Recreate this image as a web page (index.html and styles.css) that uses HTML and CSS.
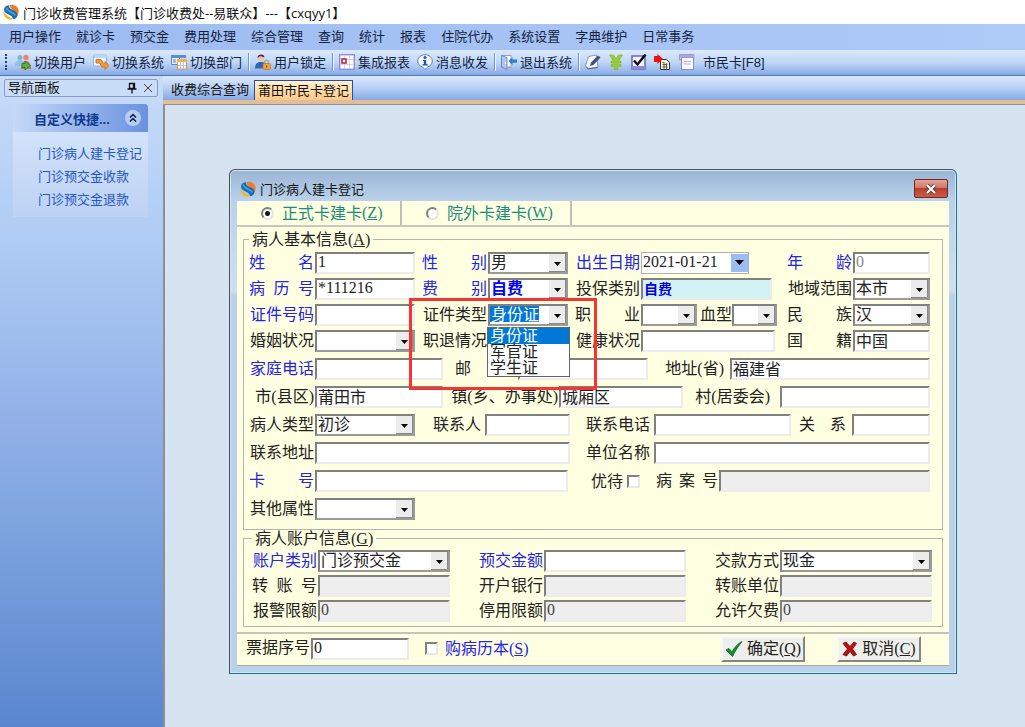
FILE: index.html
```html
<!DOCTYPE html>
<html lang="zh-CN">
<head>
  <meta charset="UTF-8" />
  <meta name="viewport" content="width=device-width, initial-scale=1.0"/>
  <title>门诊收费管理系统</title>
  <link rel="stylesheet" href="styles.css">
</head>
<body>
  <!-- Shared logo -->
  <svg class="defs" width="0" height="0">
    <symbol id="logo" viewBox="0 0 16 16">
      <path d="M6 1.500C10-.5 14.500 2 15.500 6c.3 2.500-.3 4.500-1.500 6z" fill="#f07a28"/>
      <path d="M.8 7C.5 9 3 11 10 15.300c-4 1.200-8.200-.8-9.300-4.800C.3 9 .4 8 .8 7z" fill="#f5b82c"/>
      <path d="M6 1.200C2.500 1.200.6 4 1.200 6.500c.6 3 4 3.500 6.300 5 1.500 1 2.500 2.200 2.500 3.800 3-.5 4.700-2.300 4.500-4.800C14 7 10 6.500 8 5 6.500 4 5.500 2.800 6 1.200z" fill="#1a6cb8"/>
      <path d="M3.500 3.500c0 4.500 7 4 9 8" fill="none" stroke="#45a8e0" stroke-width="1.600"/>
    </symbol>
  </svg>

  <header class="title-bar">
    <svg class="icon"><use href="#logo"/></svg>
    <h1>门诊收费管理系统【门诊收费处--易联众】---【cxqyy1】</h1>
  </header>

  <nav class="menu-bar">
    <a href="#">用户操作</a>
    <a href="#">就诊卡</a>
    <a href="#">预交金</a>
    <a href="#">费用处理</a>
    <a href="#">综合管理</a>
    <a href="#">查询</a>
    <a href="#">统计</a>
    <a href="#">报表</a>
    <a href="#">住院代办</a>
    <a href="#">系统设置</a>
    <a href="#">字典维护</a>
    <a href="#">日常事务</a>
  </nav>

  <div class="toolbar">
    <span class="grip"></span>
    <button type="button">
      <svg class="icon" viewBox="0 0 16 16"><circle cx="5" cy="3.500" r="2.500" fill="#7ab3dd"/><circle cx="11" cy="3.500" r="2.700" fill="#ed8470"/><path d="M0 12c0-4 2-6 5-6s4 2 4 6z" fill="#8ec4e8"/><path d="M6 15c0-5 2-8 5-8s5 3 5 8z" fill="#d96a50"/><path d="M7 9.500h3V7l5.500 4.500L10 16v-2.500H7z" fill="#55b83c" stroke="#237618" stroke-width=".8"/></svg>
      切换用户
    </button>
    <button type="button">
      <svg class="icon" viewBox="0 0 16 16"><rect x=".5" y="1" width="13" height="11" rx="1" fill="#eef6ff" stroke="#8ab6e6"/><path d="M1 1.500h12.500v2.500H1z" fill="#b9dafa"/><path d="M3 5.500h5l2.500 4H12V7.500l4 4-4 4v-2.500H9L6.500 9H3z" fill="#f49a34" stroke="#c9641a" stroke-width=".8"/></svg>
      切换系统
    </button>
    <button type="button">
      <svg class="icon" viewBox="0 0 16 16"><path d="M.5 1.500h8v9h-8z" fill="#e6f0fc" stroke="#5c86c9"/><path d="M0 1h15v3H0z" fill="#5d8bd6"/><path d="M2 6h3M2 8h3" stroke="#5c86c9"/><rect x="6.500" y="5.500" width="9" height="9.500" fill="#fff" stroke="#d89434"/><path d="M6 5h10v3H6z" fill="#f1b04c"/><path d="M9.500 8v7M12.500 8v7M7 11.500h8" stroke="#b9c3dd"/></svg>
      切换部门
    </button>
    <span class="separator"></span>
    <button type="button">
      <svg class="icon" viewBox="0 0 16 16"><circle cx="6" cy="4" r="3" fill="#efc39c"/><path d="M2.500 4C2 0 9.500-1 9.500 3.500 8 3 6 2 4.500 2.500z" fill="#4b2457"/><path d="M0 14.500C0 9.500 2.500 8 6 8s6 1.500 6 6.500z" fill="#2c66b4"/><path d="M9.500 10V8.500c0-3 4-3 4 0V10" fill="none" stroke="#a8a8b4" stroke-width="1.300"/><rect x="8" y="9.500" width="7.500" height="6" rx="1" fill="#f0a53a" stroke="#b8741c" stroke-width=".7"/><path d="M11.700 11.500v2" stroke="#63390a"/></svg>
      用户锁定
    </button>
    <span class="separator"></span>
    <button type="button">
      <svg class="icon" viewBox="0 0 16 16"><rect x=".7" y=".7" width="14.600" height="14.600" fill="#fff" stroke="#8e8bd8" stroke-width="1.400"/><path d="M1 5.500h14M1 10.500h14M5.500 1v14M10.500 1v14" stroke="#c9c8ec" stroke-width=".8"/><rect x="3" y="5" width="4" height="4" fill="#fff" stroke="#b02030" stroke-width="1.500"/></svg>
      集成报表
    </button>
    <button type="button">
      <svg class="icon" viewBox="0 0 16 16"><path d="M8 .7c4 0 7.300 2.800 7.300 6.300 0 3-2 5-4.600 5.900L8 15.500l-2.700-2.600C2.700 12 .7 10 .7 7 .7 3.500 4 .7 8 .7z" fill="#f5f9ff" stroke="#5f7eb0"/><circle cx="8" cy="3.500" r="1.500" fill="#2454a8"/><path d="M6 6h3.200v4H10.500v1.500H5.700V10h1.200V7.300H6z" fill="#2454a8"/></svg>
      消息收发
    </button>
    <span class="separator"></span>
    <button type="button">
      <svg class="icon" viewBox="0 0 16 16"><rect x="1" y="1.500" width="9" height="12" fill="#fff" stroke="#8ea4d0"/><path d="M.5 1.500L6 3.500V15.500L.5 13z" fill="#b4c4f0" stroke="#6478b8" stroke-width=".8"/><path d="M4.500 8v2" stroke="#fff"/><path d="M7.500 7L11.500 3v2.500H16v3.200h-4.500V11z" fill="#2d7ed8"/><circle cx="8" cy="13" r="1" fill="#e59a3c"/></svg>
      退出系统
    </button>
    <span class="separator"></span>
    <button type="button" aria-label="编辑">
      <svg class="icon" viewBox="0 0 16 16"><path d="M3.500 2.500l8-1.500 1.500 12-10 1.500L.5 12z" fill="#fbfcff" stroke="#8b93bb"/><path d="M1 12.500l2 2.500 10-1.500" fill="none" stroke="#59639c"/><path d="M5 12l1-3.500L13 1.500 15.500 3.500 8.500 11z" fill="#454d7c"/></svg>
    </button>
    <button type="button" aria-label="收费">
      <svg class="icon" viewBox="0 0 16 16"><path d="M1.500 1h4L8 5l2.500-4h4l-4 6H13v2H9.700v1.300H13v2H9.700V15.500H6.300v-3.200H3v-2h3.300V9H3V7h2.500z" fill="#99cc33" stroke="#7db02c" stroke-width=".6"/></svg>
    </button>
    <button type="button" aria-label="核对">
      <svg class="icon" viewBox="0 0 16 16"><rect x="1" y="2" width="13" height="13" fill="#f4f4ff" stroke="#6a68b4" stroke-width="1.500"/><path d="M1 12h13v3H1z" fill="#8f8cd0"/><path d="M3 6.500l3.500 4L14.500.5" fill="none" stroke="#08080c" stroke-width="2.400"/></svg>
    </button>
    <button type="button" aria-label="导入">
      <svg class="icon" viewBox="0 0 16 16"><path d="M6.500 5.500h6L15.500 8.500V15.500h-9z" fill="#fff3d0" stroke="#333"/><path d="M8.500 8.500h2M8.500 10.500h5M8.500 13h5M10 9v6M12.500 9v6" stroke="#555" stroke-width=".9"/><path d="M0 2h3.500V0L9 5 3.500 10V8H0z" fill="#f01010"/></svg>
    </button>
    <button type="button" class="card-button">
      <svg class="icon" viewBox="0 0 16 16"><rect x=".7" y=".7" width="14" height="5" fill="#e9e8fa" stroke="#8d8bc0"/><rect x="2.500" y="3.500" width="12" height="12" fill="#f8f8ff" stroke="#8d8bc0"/><path d="M1 1h13.500v2.500H1z" fill="#aaa8dc"/><path d="M5 7.500h7M5 10h7" stroke="#b5b4d8"/></svg>
      市民卡[F8]
    </button>
  </div>

  <main class="main">
    <!-- Navigation panel -->
    <aside class="sidebar">
      <div class="panel-title">
        <span>导航面板</span>
        <button type="button" aria-label="固定"><svg width="10" height="12" viewBox="0 0 10 12"><path d="M2.500 1.500h5v5h-5zM6.500 1.500v5M0.500 7h9M5 7v4.500" fill="none" stroke="#111" stroke-width="1.300"/></svg></button>
        <button type="button" aria-label="关闭"><svg width="10" height="10" viewBox="0 0 10 10"><path d="M1 1l8 8M9 1L1 9" stroke="#444"/></svg></button>
      </div>
      <section class="shortcuts">
        <header>
          <h2>自定义快捷...</h2>
          <button type="button" class="collapse" aria-label="收起"><svg width="16" height="16" viewBox="0 0 16 16"><path d="M5 7.500l3-3 3 3M5 11.500l3-3 3 3" fill="none" stroke="#0a1a3c" stroke-width="1.500"/></svg></button>
        </header>
        <a href="#">门诊病人建卡登记</a>
        <a href="#">门诊预交金收款</a>
        <a href="#">门诊预交金退款</a>
      </section>
    </aside>

    <section class="content">
      <div class="tabs">
        <button type="button">收费综合查询</button>
        <button type="button" class="active">莆田市民卡登记</button>
      </div>

      <div class="workspace">
        <form class="dialog">
          <div class="dialog-title">
            <svg class="icon"><use href="#logo"/></svg>
            <h2>门诊病人建卡登记</h2>
            <button type="button" class="close" aria-label="关闭"><svg width="12" height="10" viewBox="0 0 12 10"><path d="M2 1l8 8M10 1L2 9" stroke="#5b3a3a" stroke-width="4"/><path d="M2 1l8 8M10 1L2 9" stroke="#fff" stroke-width="2.200"/></svg></button>
          </div>

          <div class="dialog-body">
            <div class="card-type">
              <label><input type="radio" name="cardType" checked>正式卡建卡<span class="key">(<u>Z</u>)</span></label>
              <label><input type="radio" name="cardType">院外卡建卡<span class="key">(<u>W</u>)</span></label>
            </div>

            <fieldset class="basic">
              <legend>病人基本信息<span class="key">(<u>A</u>)</span></legend>

              <div class="row row-four">
                <div class="pair"><label class="spread blue" for="name">姓名</label><input id="name" class="key" value="1"></div>
                <div class="pair"><label class="spread blue" for="sex">性别</label><select id="sex"><option>男</option></select></div>
                <div class="pair"><label class="blue" for="birth">出生日期</label><input id="birth" class="key date" value="2021-01-21"></div>
                <div class="pair"><label class="spread blue" for="age">年龄</label><input id="age" class="key muted" value="0"></div>
              </div>
              <div class="row row-four">
                <div class="pair"><label class="spread blue" for="record">病历号</label><input id="record" class="key" value="*111216"></div>
                <div class="pair"><label class="spread blue" for="fee">费别</label><select id="fee" class="strong"><option>自费</option></select></div>
                <div class="pair"><label for="insure">投保类别</label><input id="insure" class="insure" value="自费"></div>
                <div class="pair"><label for="region">地域范围</label><select id="region"><option>本市</option></select></div>
              </div>
              <div class="row row-four">
                <div class="pair"><label class="blue" for="idNo">证件号码</label><input id="idNo"></div>
                <div class="pair">
                  <label for="idType">证件类型</label>
                  <select id="idType" class="selected"><option>身份证</option><option>军官证</option><option>学生证</option></select>
                  <ul class="dropdown">
                    <li class="current">身份证</li>
                    <li>军官证</li>
                    <li>学生证</li>
                  </ul>
                </div>
                <div class="job">
                  <div class="pair"><label class="spread" for="job">职业</label><select id="job"><option></option></select></div>
                  <div class="pair blood"><label for="blood">血型</label><select id="blood"><option></option></select></div>
                </div>
                <div class="pair"><label class="spread" for="nation">民族</label><select id="nation"><option>汉</option></select></div>
              </div>
              <div class="row row-four">
                <div class="pair"><label for="marriage">婚姻状况</label><select id="marriage"><option></option></select></div>
                <div class="pair"><label for="retire">职退情况</label><select id="retire"><option></option></select></div>
                <div class="pair"><label for="health">健康状况</label><input id="health" class="health"></div>
                <div class="pair"><label class="spread" for="country">国籍</label><input id="country" value="中国"></div>
              </div>
              <div class="row row-phone">
                <div class="pair"><label class="blue" for="phone">家庭电话</label><input id="phone"></div>
                <div class="pair"><label class="spread narrow" for="zip">邮编</label><input id="zip"></div>
                <div class="pair"><label class="province" for="province">地址<span class="key">(</span>省<span class="key">)</span></label><input id="province" value="福建省"></div>
              </div>
              <div class="row row-city">
                <div class="pair"><label for="city">市<span class="key">(</span>县区<span class="key">)</span></label><input id="city" value="莆田市"></div>
                <div class="pair"><label class="town" for="town">镇<span class="key">(</span>乡、办事处<span class="key">)</span></label><input id="town" value="城厢区"></div>
                <div class="pair"><label class="village" for="village">村<span class="key">(</span>居委会<span class="key">)</span></label><input id="village"></div>
              </div>
              <div class="row row-contact">
                <div class="pair"><label for="kind">病人类型</label><select id="kind"><option>初诊</option></select></div>
                <div class="pair"><label class="contact" for="contact">联系人</label><input id="contact"></div>
                <div class="pair"><label class="wide" for="tel">联系电话</label><input id="tel"></div>
                <div class="pair"><label class="spread relation" for="relation">关系</label><input id="relation"></div>
              </div>
              <div class="row row-address">
                <div class="pair"><label for="address">联系地址</label><input id="address"></div>
                <div class="pair"><label class="wide" for="company">单位名称</label><input id="company"></div>
              </div>
              <div class="row row-card">
                <div class="pair"><label class="spread blue" for="card">卡号</label><input id="card"></div>
                <div class="check"><label for="discount">优待</label><input type="checkbox" id="discount"></div>
                <div class="pair"><label class="spread narrow" for="caseNo">病案号</label><input id="caseNo" disabled></div>
              </div>
              <div class="row row-four">
                <div class="pair"><label for="other">其他属性</label><select id="other"><option></option></select></div>
              </div>

              <!-- Highlighted area -->
              <div class="highlight"></div>
            </fieldset>

            <fieldset class="account">
              <legend>病人账户信息<span class="key">(<u>G</u>)</span></legend>
              <div class="pair"><label class="blue" for="accType">账户类别</label><select id="accType"><option>门诊预交金</option></select></div>
              <div class="pair"><label class="blue" for="prepay">预交金额</label><input id="prepay"></div>
              <div class="pair"><label for="payWay">交款方式</label><select id="payWay"><option>现金</option></select></div>
              <div class="pair"><label class="spread" for="transNo">转账号</label><input id="transNo" disabled></div>
              <div class="pair"><label for="bank">开户银行</label><input id="bank" disabled></div>
              <div class="pair"><label for="transCo">转账单位</label><input id="transCo" disabled></div>
              <div class="pair"><label for="warn">报警限额</label><input id="warn" class="key" value="0" disabled></div>
              <div class="pair"><label for="stop">停用限额</label><input id="stop" class="key" value="0" disabled></div>
              <div class="pair"><label for="owe">允许欠费</label><input id="owe" class="key" value="0" disabled></div>
            </fieldset>

            <div class="dialog-footer">
              <div class="pair"><label for="bill">票据序号</label><input id="bill" class="key" value="0"></div>
              <label class="buy blue"><input type="checkbox">购病历本<span class="key">(<u>S</u>)</span></label>
              <button type="submit" class="action"><svg width="18" height="16" viewBox="0 0 18 16"><path d="M1 9l3-1.500L7 11C9.500 6 13 2.500 17 .5 13.500 5 10 10 7.500 15.500z" fill="#0c9a18" stroke="#075c40" stroke-width=".8"/></svg><span>确定<span class="key">(<u>Q</u>)</span></span></button>
              <button type="button" class="action"><svg width="16" height="16" viewBox="0 0 16 16"><path d="M1 2.500L4 1l4 4.500L12 1l2.500 1.500L10.500 8l4 5.500L11.500 15 8 10.500 4.500 15 1 13.500 5.500 8z" fill="#c01010" stroke="#700808" stroke-width=".8"/></svg><span>取消<span class="key">(<u>C</u>)</span></span></button>
            </div>
          </div>
        </form>
      </div>
    </section>
  </main>
</body>
</html>
```
FILE: styles.css
```css
/* Reset & base styles */
* {
  margin: 0;
  padding: 0;
  box-sizing: border-box;
}
html, body {
  height: 100%;
}
body {
  display: flex;
  flex-direction: column;
  background: #fff;
  color: #111;
  font-family: "Liberation Sans", "Noto Sans CJK SC", sans-serif;
  font-size: 13px;
}
button, input, select {
  font: inherit;
  color: inherit;
}
button {
  border: none;
  background: none;
}
a {
  color: inherit;
  text-decoration: none;
}
h1, h2 {
  font-size: 13px;
  font-weight: normal;
}
.defs {
  position: absolute;
}
.icon {
  flex: none;
  width: 16px;
  height: 16px;
}
.blue {
  color: #2424e8;
}

/* Title & menu */
.title-bar {
  display: flex;
  align-items: center;
  gap: 4px;
  height: 24px;
  padding-left: 3px;
}
.title-bar h1 {
  font-family: "Open Sans", "Noto Sans CJK SC", sans-serif;
}
.menu-bar {
  display: flex;
  align-items: center;
  gap: 15px;
  height: 26px;
  padding: 0 0 4px 9px;
  background: linear-gradient(90deg, #9dbbf1, #aecaf7);
  color: #14223f;
}

/* Toolbar */
.toolbar {
  display: flex;
  align-items: center;
  gap: 7px;
  height: 26px;
  padding: 0 0 2px 5px;
  background: linear-gradient(#dbe9fc, #bfd6f7 50%, #84a9e3);
  border-bottom: 1px solid #4e75bd;
  color: #14223f;
}
.toolbar button {
  display: flex;
  align-items: center;
  gap: 3px;
}
.toolbar .card-button {
  gap: 8px;
  padding-left: 2px;
}
.grip {
  width: 3px;
  height: 16px;
  border-left: 2px dotted #27427e;
}
.separator {
  width: 1px;
  height: 18px;
  margin: 0 -1px;
  background: #7296d6;
  box-shadow: 1px 0 #eef5ff;
}

/* Layout */
.main {
  flex: 1;
  display: flex;
}
.sidebar {
  width: 163px;
  padding: 3px 5px 0 4px;
  background: linear-gradient(#c8dbf9, #afccf4 25%, #94b2e8 51%, #7ba2dd 71%, #5a86cf 100%);
}
.panel-title {
  display: flex;
  align-items: center;
  gap: 6px;
  height: 18px;
  padding: 0 4px 0 3px;
  border: 1px solid #8b9cc0;
  border-radius: 2px;
  background: #c9dcf8;
}
.panel-title span {
  flex: 1;
  padding-bottom: 3px;
}
.panel-title button {
  display: flex;
}
.shortcuts {
  margin: 7px 10px 0 9px;
  padding-bottom: 6px;
  background: linear-gradient(#d9e8fc, #bdd2f3);
}
.shortcuts header {
  display: flex;
  align-items: center;
  justify-content: space-between;
  height: 28px;
  margin-bottom: 10px;
  padding: 0 7px 0 21px;
  border-radius: 0 3px 0 0;
  background: linear-gradient(90deg, #c5d9f8, #6a92e0);
}
.shortcuts h2 {
  font-weight: bold;
  color: #103a90;
}
.collapse {
  display: flex;
  border-radius: 50%;
  background: #b5cbf0;
}
.shortcuts a {
  display: block;
  padding-left: 25px;
  line-height: 23px;
  white-space: nowrap;
  color: #2457c0;
}
.content {
  flex: 1;
  display: flex;
  flex-direction: column;
  min-width: 0;
}
.tabs {
  display: flex;
  align-items: flex-end;
  height: 28px;
  padding-left: 3px;
  background: linear-gradient(#dce9fc, #b6cff4 50%, #86a9e3);
  border-bottom: 4px solid #e2bd98;
}
.tabs button {
  height: 20px;
  padding: 0 5px;
  line-height: 18px;
  white-space: nowrap;
}
.tabs .active {
  padding: 0 3px;
  border: 1px solid #2c4c9c;
  border-bottom: none;
  background: linear-gradient(#fff0cc, #fcc888);
}
.workspace {
  flex: 1;
  padding: 64px 68px 0 64px;
  border-top: 1px solid #8c9096;
  border-left: 2px solid #8c9096;
  background: #d6e4f1;
}

/* Dialog */
.dialog {
  border: 1px solid #46525c;
  border-right-color: #1c7688;
  border-bottom-color: #1c7688;
  border-radius: 6px 6px 0 0;
  padding: 0 7px 7px;
  background: linear-gradient(#9ab4d3, #b9d1ea 30px, #cfdff0 120px, #b9d1ea 126px);
  box-shadow: inset 0 0 0 1px #d4e4f4;
}
.dialog-title {
  display: flex;
  align-items: center;
  gap: 4px;
  height: 31px;
  padding: 6px 1px 0 3px;
}
.close {
  display: flex;
  align-items: center;
  justify-content: center;
  width: 34px;
  height: 19px;
  margin-left: auto;
  border: 1px solid #6b2a2a;
  border-radius: 2px;
  background: linear-gradient(#e4a598, #d2776a 45%, #bb3d2c 50%, #cc5c48);
}
.dialog-body {
  background: #ffffe1;
  color: #222;
  font-size: 16px;
  line-height: 17px;
  border-bottom: 1px solid #a8a8a0;
}
/* Half-width characters */
.key {
  font-family: "Liberation Serif", serif;
  line-height: 1;
}
.card-type {
  display: flex;
  height: 26px;
  border-bottom: 2px solid #c8c8c0;
  color: #1c8c7c;
}
.card-type label {
  display: flex;
  align-items: center;
  width: 165px;
  padding-left: 24px;
  border-right: 2px solid #c0c0b8;
}
.card-type label + label {
  width: 170px;
}
.card-type input {
  appearance: none;
  width: 13px;
  height: 13px;
  margin-right: 8px;
  border: 2px solid #e4e4e4;
  border-top-color: #808080;
  border-left-color: #808080;
  border-radius: 50%;
  background: #fff;
}
.card-type input:checked {
  background: radial-gradient(#111 2px, #fff 3px);
}

/* Groups */
fieldset {
  position: relative;
  min-width: 0;
  margin: 0 6px;
  border: 1px solid #b4b4ac;
}
legend {
  height: 17px;
  padding: 0 3px;
}
.basic {
  margin-top: 4px;
  padding: 4px 12px 3px 5px;
}
.account {
  display: grid;
  grid-template-columns: 198px 208px 1fr;
  gap: 3px 28px;
  padding: 3px 10px 4px 8px;
}
.row {
  display: grid;
  margin-bottom: 6px;
}
.row:nth-of-type(-n+3) {
  margin-bottom: 4px;
}
.row-four {
  grid-template-columns: 166px 146px 205px 1fr;
  column-gap: 7px;
}
.row-phone {
  grid-template-columns: 194px 193px 1fr;
  column-gap: 12px;
}
.row-city {
  grid-template-columns: 194px 236px 1fr;
  column-gap: 4px;
}
.row-contact {
  grid-template-columns: 166px 147px 213px 1fr;
  column-gap: 8px;
}
.row-address {
  grid-template-columns: 321px 1fr;
  column-gap: 8px;
}
.row-card {
  grid-template-columns: 319px 56px 1fr;
  column-gap: 16px;
}

/* Label + field */
.pair {
  position: relative;
  display: flex;
  align-items: center;
  min-width: 0;
}
.pair label {
  flex: none;
  width: 66px;
  padding: 0 1px 2px 0;
  text-align: right;
  white-space: nowrap;
}
.pair .spread {
  text-align: justify;
  text-align-last: justify;
}
.pair .wide {
  width: 76px;
  padding-right: 4px;
}
.pair .province {
  width: 70px;
  padding-right: 6px;
}
.pair .town {
  width: 112px;
}
.pair .village {
  width: 93px;
  padding-right: 10px;
}
.pair .contact {
  width: 62px;
  padding-right: 4px;
}
.pair .relation {
  width: 53px;
  padding-right: 6px;
}
.pair .narrow {
  width: 63px;
}
.pair input, .pair select {
  appearance: none;
  flex: 1;
  min-width: 0;
  height: 22px;
  padding: 0 1px 2px;
  border: 2px solid #ececec;
  border-top-color: #808080;
  border-left-color: #808080;
  border-radius: 0;
  background-color: #fff;
}
.pair input:disabled {
  background-color: #eee;
  color: #444;
}
.pair select {
  border-color: #808080 #9a9a9a #9a9a9a #808080;
  background: #fff url("data:image/svg+xml,%3Csvg xmlns='http://www.w3.org/2000/svg' width='17' height='18'%3E%3Cpath fill='%23ececec' d='M0 0h17v18H0z'/%3E%3Cpath fill='none' stroke='%23888' d='M0 17.500h16.500V0'/%3E%3Cpath d='M5 8h7l-3.500 4z'/%3E%3C/svg%3E") right center no-repeat;
}
.pair .muted {
  color: #888;
}
.pair .date {
  flex: none;
  width: 108px;
  border: 1px solid #b0b0b0;
  background: #fff url("data:image/svg+xml,%3Csvg xmlns='http://www.w3.org/2000/svg' width='17' height='18'%3E%3Cpath fill='%239dbcf4' d='M0 0h17v18H0z'/%3E%3Cpath d='M4 6h9l-4.500 5z'/%3E%3C/svg%3E") right center no-repeat;
}
.pair .strong {
  color: #0000f0;
  font-weight: bold;
}
.pair .insure {
  flex: none;
  width: 131px;
  background: #d2f3f3;
  color: #0000e0;
  font-size: 14px;
  font-weight: bold;
}
.pair .health {
  flex: none;
  width: 134px;
}
.pair .selected {
  color: #fff;
  background-image: linear-gradient(#0078d7, #0078d7), url("data:image/svg+xml,%3Csvg xmlns='http://www.w3.org/2000/svg' width='17' height='18'%3E%3Cpath fill='%23ececec' d='M0 0h17v18H0z'/%3E%3Cpath fill='none' stroke='%23888' d='M0 17.500h16.500V0'/%3E%3Cpath d='M5 8h7l-3.500 4z'/%3E%3C/svg%3E");
  background-size: 49px 16px, 17px 18px;
  background-position: 0 0, right center;
}
.job {
  display: flex;
  gap: 3px;
}
.job .pair {
  width: 122px;
}
.job .blood {
  width: 77px;
}
.job .blood label {
  width: 32px;
  padding-right: 0;
}

/* Open list of the document type */
.dropdown {
  position: absolute;
  top: 23px;
  left: 65px;
  z-index: 2;
  width: 83px;
  border: 1px solid #666;
  background: #fff;
  list-style: none;
}
.dropdown li {
  height: 16px;
  padding-left: 2px;
  line-height: 15px;
}
.dropdown .current {
  background: #0078d7;
  color: #fff;
}
.highlight {
  position: absolute;
  top: 50px;
  left: 165px;
  z-index: 3;
  width: 188px;
  height: 92px;
  border: 3px solid #fa3232;
  pointer-events: none;
}

/* Check boxes */
.check, .buy {
  display: flex;
  align-items: center;
}
.check {
  justify-content: flex-end;
  gap: 4px;
  white-space: nowrap;
}
input[type="checkbox"] {
  appearance: none;
  flex: none;
  width: 13px;
  height: 13px;
  border: 2px solid #e8e8e8;
  border-top-color: #808080;
  border-left-color: #808080;
  background: #fff;
}

/* Footer */
.dialog-footer {
  display: flex;
  align-items: center;
  gap: 16px;
  height: 33px;
  margin-top: 5px;
  padding: 0 28px 2px 8px;
  border-top: 2px solid #c4c4bc;
}
.dialog-footer .pair {
  width: 164px;
}
.dialog-footer input[type="checkbox"] {
  margin-right: 7px;
}
.action {
  display: flex;
  align-items: center;
  justify-content: center;
  gap: 4px;
  width: 84px;
  height: 26px;
  margin-left: 16px;
  border: 2px solid #858585;
  border-top-color: #f8f8f8;
  border-left-color: #f8f8f8;
  background: #eeeeea;
  white-space: nowrap;
}
.buy + .action {
  margin-left: auto;
}
```
